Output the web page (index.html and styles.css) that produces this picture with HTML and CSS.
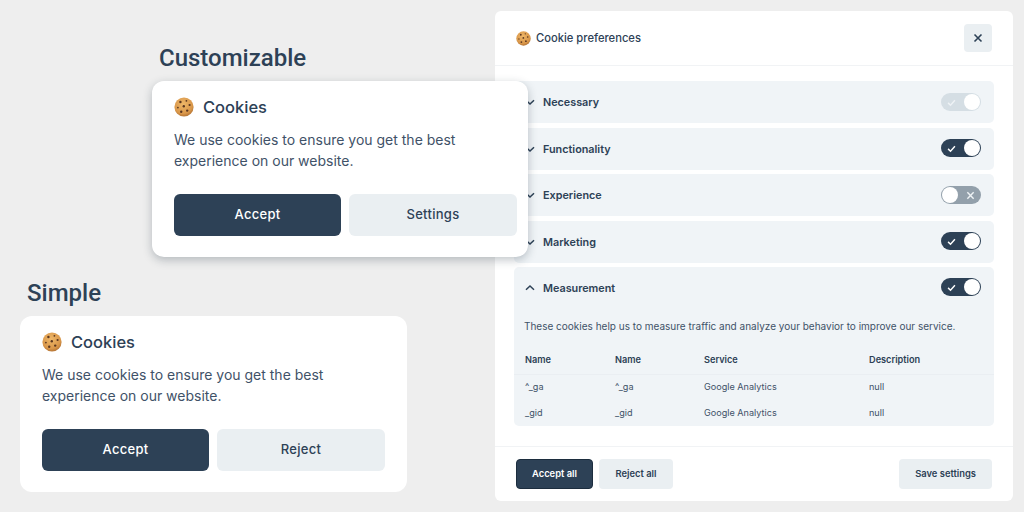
FILE: index.html
```html
<!DOCTYPE html>
<html lang="en">
<head>
  <meta charset="UTF-8">
  <title>Cookie consent</title>
  <link rel="stylesheet" href="styles.css">
</head>
<body>
  <svg class="defs" width="0" height="0">
    <defs>
      <radialGradient id="dough" cx="45%" cy="35%" r="70%">
        <stop offset="0" stop-color="#eeb768"/>
        <stop offset="0.7" stop-color="#d9974a"/>
        <stop offset="1" stop-color="#a9682c"/>
      </radialGradient>
      <symbol id="cookie" viewBox="0 0 20 20">
        <circle cx="10" cy="10" r="9.6" fill="url(#dough)"/>
        <g fill="#5a3620">
          <circle cx="6.4" cy="5" r="1.2"/>
          <circle cx="12.4" cy="3.8" r="0.9"/>
          <circle cx="15.6" cy="8" r="1.1"/>
          <circle cx="9.8" cy="9.2" r="1.2"/>
          <circle cx="3.9" cy="10.6" r="0.9"/>
          <circle cx="7.2" cy="14.8" r="1.2"/>
          <circle cx="13.2" cy="13.6" r="1.2"/>
        </g>
      </symbol>
      <symbol id="chev" viewBox="0 0 10 10">
        <path d="M1 3.2 5 7 9 3.2" fill="none" stroke="currentColor" stroke-width="1.5"/>
      </symbol>
      <symbol id="tick" viewBox="0 0 10 10">
        <path d="M1.2 5.4 3.9 8 8.8 2.4" fill="none" stroke="currentColor" stroke-width="1.6"/>
      </symbol>
      <symbol id="cross" viewBox="0 0 10 10">
        <path d="M1.5 1.5 8.5 8.5M8.5 1.5 1.5 8.5" fill="none" stroke="currentColor" stroke-width="1.6"/>
      </symbol>
    </defs>
  </svg>

  <main class="stage">
    <aside class="prefs">
      <header class="prefs-head">
        <div class="prefs-title">
          <svg class="cookie-sm"><use href="#cookie"/></svg>
          <span>Cookie preferences</span>
        </div>
        <button class="close-btn"><svg class="icon-close"><use href="#cross"/></svg></button>
      </header>

      <div class="prefs-body">
        <div class="row">
          <div class="row-head">
            <svg class="chev"><use href="#chev"/></svg>
            <span class="row-name">Necessary</span>
            <span class="toggle toggle-locked"><svg class="mark"><use href="#tick"/></svg><i class="knob"></i></span>
          </div>
        </div>
        <div class="row">
          <div class="row-head">
            <svg class="chev"><use href="#chev"/></svg>
            <span class="row-name">Functionality</span>
            <span class="toggle toggle-on"><svg class="mark"><use href="#tick"/></svg><i class="knob"></i></span>
          </div>
        </div>
        <div class="row">
          <div class="row-head">
            <svg class="chev"><use href="#chev"/></svg>
            <span class="row-name">Experience</span>
            <span class="toggle toggle-off"><i class="knob"></i><svg class="mark"><use href="#cross"/></svg></span>
          </div>
        </div>
        <div class="row">
          <div class="row-head">
            <svg class="chev"><use href="#chev"/></svg>
            <span class="row-name">Marketing</span>
            <span class="toggle toggle-on"><svg class="mark"><use href="#tick"/></svg><i class="knob"></i></span>
          </div>
        </div>
        <div class="row">
          <div class="row-head">
            <svg class="chev chev-open"><use href="#chev"/></svg>
            <span class="row-name">Measurement</span>
            <span class="toggle toggle-on"><svg class="mark"><use href="#tick"/></svg><i class="knob"></i></span>
          </div>
          <p class="row-desc">These cookies help us to measure traffic and analyze your behavior to improve our service.</p>
          <table class="cookie-table">
            <thead>
              <tr><th>Name</th><th>Name</th><th>Service</th><th>Description</th></tr>
            </thead>
            <tbody>
              <tr><td>^_ga</td><td>^_ga</td><td>Google Analytics</td><td>null</td></tr>
              <tr><td>_gid</td><td>_gid</td><td>Google Analytics</td><td>null</td></tr>
            </tbody>
          </table>
        </div>
      </div>

      <footer class="prefs-foot">
        <button class="foot-btn foot-primary">Accept all</button>
        <button class="foot-btn foot-reject">Reject all</button>
        <button class="foot-btn foot-save">Save settings</button>
      </footer>
    </aside>

    <section class="demo demo-custom">
      <h2>Customizable</h2>
      <div class="card card-custom">
        <div class="card-title"><svg class="cookie-lg"><use href="#cookie"/></svg><span>Cookies</span></div>
        <p class="card-text">We use cookies to ensure you get the best experience on our website.</p>
        <div class="card-btns">
          <button class="btn btn-primary">Accept</button>
          <button class="btn">Settings</button>
        </div>
      </div>
    </section>

    <section class="demo demo-simple">
      <h2>Simple</h2>
      <div class="card">
        <div class="card-title"><svg class="cookie-lg"><use href="#cookie"/></svg><span>Cookies</span></div>
        <p class="card-text">We use cookies to ensure you get the best experience on our website.</p>
        <div class="card-btns">
          <button class="btn btn-primary">Accept</button>
          <button class="btn">Reject</button>
        </div>
      </div>
    </section>
  </main>
</body>
</html>
```

FILE: styles.css
```css
* {
  box-sizing: border-box;
}
html, body {
  margin: 0;
  height: 100%;
  overflow: hidden;
}
body {
  background: #eeeeee;
  color: #2d4156;
  font-family: Inter, "Liberation Sans", sans-serif;
}
button {
  font-family: inherit;
  border: none;
  cursor: pointer;
}
.defs {
  position: absolute;
}
.stage {
  position: relative;
  width: 1024px;
  height: 512px;
}

/* the three pieces sit freely on the canvas and overlap */
.demo {
  position: absolute;
}
.demo-custom {
  left: 152px;
  top: 43px;
  z-index: 2;
}
.demo-simple {
  left: 20px;
  top: 278px;
}
.demo h2 {
  margin: 0 0 8px 7px;
  height: 30px;
  font-family: Roboto, sans-serif;
  font-weight: 500;
  font-size: 24px;
  line-height: 31px;
  color: #2d4156;
}

.card {
  width: 387px;
  height: 176px;
  padding: 14px 22px 21px;
  background: #fff;
  border-radius: 12px;
}
.card-custom {
  width: 376px;
  padding-right: 11px;
  box-shadow: 0 3px 10px rgba(30, 45, 60, 0.28);
}
.card-title {
  display: flex;
  align-items: center;
  gap: 9px;
  height: 24px;
  font-size: 16.5px;
  font-weight: 500;
}
.cookie-lg {
  width: 20px;
  height: 20px;
}
.card-text {
  margin: 10px 0 23px;
  font-size: 14px;
  line-height: 21px;
  color: #3f5268;
}
.card-btns {
  display: flex;
  gap: 8px;
}
.btn {
  flex: 1;
  height: 42px;
  padding: 0 0 2px;
  border-radius: 6px;
  background: #eaeff2;
  color: #2d4156;
  font-size: 13px;
  font-weight: 500;
  letter-spacing: 0.3px;
}
.btn-primary {
  flex: 0 0 167px;
  background: #2d4156;
  color: #fff;
}

.prefs {
  position: absolute;
  left: 495px;
  top: 11px;
  width: 518px;
  height: 490px;
  display: flex;
  flex-direction: column;
  background: #fff;
  border-radius: 6px;
}
.prefs-head {
  display: flex;
  align-items: center;
  justify-content: space-between;
  height: 55px;
  padding: 0 21px;
  border-bottom: 1px solid #f1f3f5;
}
.prefs-title {
  display: flex;
  align-items: center;
  gap: 5px;
  font-size: 11.2px;
  font-weight: 500;
}
.cookie-sm {
  width: 15px;
  height: 15px;
}
.close-btn {
  display: flex;
  align-items: center;
  justify-content: center;
  width: 28px;
  height: 28px;
  padding: 0;
  border-radius: 4px;
  background: #eaeff2;
  color: #2d4156;
}
.icon-close {
  width: 10px;
  height: 10px;
}

.prefs-body {
  flex: 1;
  display: flex;
  flex-direction: column;
  gap: 4px;
  padding: 15px 19px 0;
}
.row {
  background: #f0f4f7;
  border-radius: 5px;
}
.row:nth-child(even) {
  margin-top: 1px;
}
.row-head {
  display: flex;
  align-items: center;
  height: 42px;
  padding: 0 13px 0 11px;
}
.chev {
  width: 10px;
  height: 10px;
  margin-right: 8px;
  color: #2d4156;
}
.chev-open {
  transform: rotate(180deg);
}
.row-name {
  flex: 1;
  font-size: 10.8px;
  font-weight: 600;
}
.toggle {
  display: flex;
  align-items: center;
  justify-content: space-between;
  width: 40px;
  height: 18px;
  padding: 0 1px 0 6px;
  border-radius: 9px;
}
.row:nth-child(even) .toggle,
.row:last-child .toggle {
  margin-bottom: 2px;
}
.knob {
  display: block;
  width: 16px;
  height: 16px;
  border-radius: 50%;
  background: #fff;
}
.mark {
  width: 9px;
  height: 9px;
}
.toggle-on {
  background: #2d4156;
  color: #fff;
}
.toggle-locked {
  background: #d5dee4;
  color: #eef2f5;
}
.toggle-off {
  padding: 0 6px 0 1px;
  background: #93a0ab;
  color: #eef2f5;
}

.row-desc {
  margin: 9px 0 14px;
  padding: 0 10px;
  font-size: 10px;
  line-height: 16px;
  color: #3f5268;
}
.cookie-table {
  width: 100%;
  table-layout: fixed;
  border-collapse: collapse;
  font-size: 9.1px;
}
.cookie-table th {
  height: 26px;
  padding: 0 0 3px;
  text-align: left;
  font-weight: 600;
  font-size: 9.2px;
  border-bottom: 1px solid #eaeef2;
}
.cookie-table td {
  height: 26px;
  padding: 0 0 2px;
  color: #3f5268;
}
.cookie-table tr > :nth-child(1) {
  width: 101px;
  padding-left: 11px;
}
.cookie-table tr > :nth-child(2) {
  width: 89px;
}
.cookie-table tr > :nth-child(3) {
  width: 165px;
}

.prefs-foot {
  display: flex;
  gap: 6px;
  height: 55px;
  padding: 12px 21px 0;
  border-top: 1px solid #f1f3f5;
}
.foot-btn {
  height: 30px;
  padding: 0 16px 2px;
  border-radius: 4px;
  background: #eaeff2;
  color: #2d4156;
  font-size: 9.4px;
  font-weight: 600;
}
.foot-primary {
  padding: 0 15px 2px;
  background: #2d4156;
  color: #fff;
  border: 1px solid #1c2d3e;
}
.foot-reject {
  width: 74px;
}
.foot-save {
  margin-left: auto;
}
```
